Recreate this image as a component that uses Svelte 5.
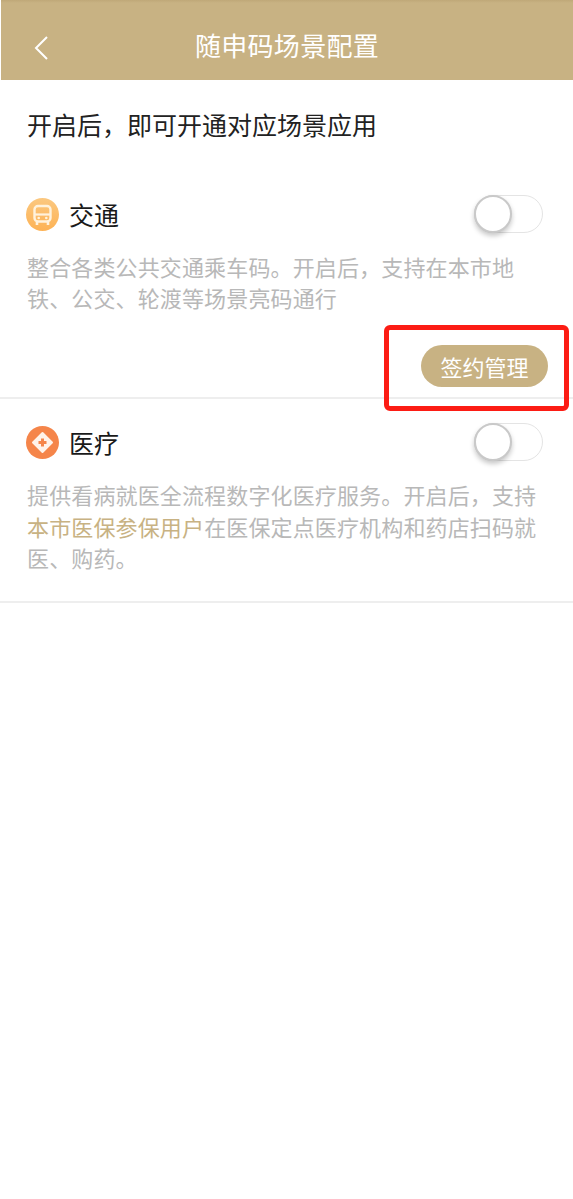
<script>
    const scenes = [
        { name: "交通", kind: "bus", managed: true },
        { name: "医疗", kind: "medical", managed: false }
    ]
</script>

<div class="page">
    <header class="topbar">
        <svg class="back" viewBox="0 0 16 26" width="16" height="26">
            <path d="M15 2 L4 13 L15 24" fill="none" stroke="#fff" stroke-width="2" />
        </svg>
        <h1>随申码场景配置</h1>
    </header>

    <p class="intro">开启后，即可开通对应场景应用</p>

    {#each scenes as scene}
        <section class="scene" class:managed={scene.managed}>
            <div class="scene-head">
                {#if scene.kind == "bus"}
                    <svg class="icon" viewBox="0 0 33 33" width="33" height="33">
                        <defs>
                            <linearGradient id="busBg" x1="0" y1="0" x2="0" y2="1">
                                <stop offset="0" stop-color="#fbc880" />
                                <stop offset="1" stop-color="#fdb254" />
                            </linearGradient>
                        </defs>
                        <circle cx="16.5" cy="16.5" r="16.5" fill="url(#busBg)" />
                        <rect x="8.5" y="8" width="16" height="15.5" rx="3.5" fill="none" stroke="#fff2dc" stroke-width="2.4" />
                        <path d="M8.5 16.5 H24.5" stroke="#fff2dc" stroke-width="2.2" />
                        <path d="M11 24 V27 M22 24 V27" stroke="#fff2dc" stroke-width="2.6" />
                        <circle cx="12.7" cy="20" r="1.3" fill="#fff2dc" />
                        <circle cx="20.3" cy="20" r="1.3" fill="#fff2dc" />
                    </svg>
                {:else}
                    <svg class="icon" viewBox="0 0 33 33" width="33" height="33">
                        <circle cx="16.5" cy="16.5" r="16.5" fill="#f5854a" />
                        <path d="M16.5 7 L26 16.5 L16.5 26 L7 16.5 Z" fill="#fff3ea" stroke="#fff3ea" stroke-width="2" stroke-linejoin="round" />
                        <path d="M16.5 12.5 V20.5 M12.5 16.5 H20.5" stroke="#f5854a" stroke-width="3" />
                    </svg>
                {/if}
                <h2>{scene.name}</h2>
                <div class="switch"><span class="knob"></span></div>
            </div>

            {#if scene.kind == "bus"}
                <p class="desc">整合各类公共交通乘车码。开启后，支持在本市地铁、公交、轮渡等场景亮码通行</p>
                <div class="actions">
                    <button class="manage">签约管理</button>
                    <div class="callout"></div>
                </div>
            {:else}
                <p class="desc">提供看病就医全流程数字化医疗服务。开启后，支持<span class="link">本市医保参保用户</span>在医保定点医疗机构和药店扫码就医、购药。</p>
            {/if}
        </section>
    {/each}
</div>

<style>
    :global(body) {
        margin: 0;
        background: #fff;
    }

    .page {
        height: 1199px;
        font-family: "Noto Sans CJK SC", "Noto Sans", sans-serif;
        overflow: hidden;
    }

    .topbar {
        position: relative;
        display: flex;
        align-items: center;
        justify-content: center;
        height: 80px;
        margin-left: 1px;
        padding-top: 10px;
        box-sizing: border-box;
        background: linear-gradient(#bfa878 0, #c8b283 3px);
    }

    .back {
        position: absolute;
        left: 31px;
        top: 35px;
    }

    h1 {
        margin: 0;
        font-size: 26px;
        letter-spacing: 0.3px;
        font-weight: 400;
        color: #fff;
        line-height: 36px;
    }

    .intro {
        margin: 0;
        padding: 26px 0 0 27px;
        font-size: 25px;
        line-height: 36px;
        color: #222;
    }

    .scene {
        position: relative;
        padding: 0 27px;
        border-bottom: 2px solid #eee;
    }

    .scene-head {
        display: flex;
        align-items: center;
        height: 40px;
    }

    .scene.managed .scene-head {
        padding-top: 52px;
    }

    .scene:not(.managed) .scene-head {
        padding-top: 23px;
    }

    .icon {
        flex: none;
        margin-left: -1px;
    }

    h2 {
        flex: 1;
        margin: 0 0 0 10px;
        font-size: 25px;
        font-weight: 400;
        color: #1a1a1a;
    }

    .switch {
        position: relative;
        width: 69px;
        height: 38px;
        box-sizing: border-box;
        margin-right: 3px;
        border: 1px solid #e4e4e4;
        border-radius: 19px;
    }

    .knob {
        position: absolute;
        left: -1px;
        top: -1px;
        width: 38px;
        height: 38px;
        box-sizing: border-box;
        background: #fff;
        border: 2px solid #c9c9c9;
        border-radius: 50%;
        box-shadow: 0 3px 5px rgba(0, 0, 0, 0.22);
    }

    .desc {
        margin: 17px 0 0;
        font-size: 22px;
        letter-spacing: 0.14px;
        line-height: 31px;
        color: #b8b8b8;
    }

    .scene:not(.managed) .desc {
        margin-right: -4px;
        padding-bottom: 27px;
        line-height: 31.5px;
    }

    .link {
        color: #c8b283;
    }

    .actions {
        position: relative;
        display: flex;
        justify-content: flex-end;
        padding: 32px 0 10px;
        margin-right: -2px;
    }

    .manage {
        width: 127px;
        height: 42px;
        padding: 0;
        border: none;
        border-radius: 21px;
        background: #c8b283;
        color: #fff;
        font: inherit;
        font-size: 22px;
        line-height: 42px;
    }

    .callout {
        position: absolute;
        right: -21px;
        top: 12px;
        width: 185px;
        height: 86px;
        box-sizing: border-box;
        border: 5px solid #fc1c14;
        border-radius: 6px;
        pointer-events: none;
    }
</style>
